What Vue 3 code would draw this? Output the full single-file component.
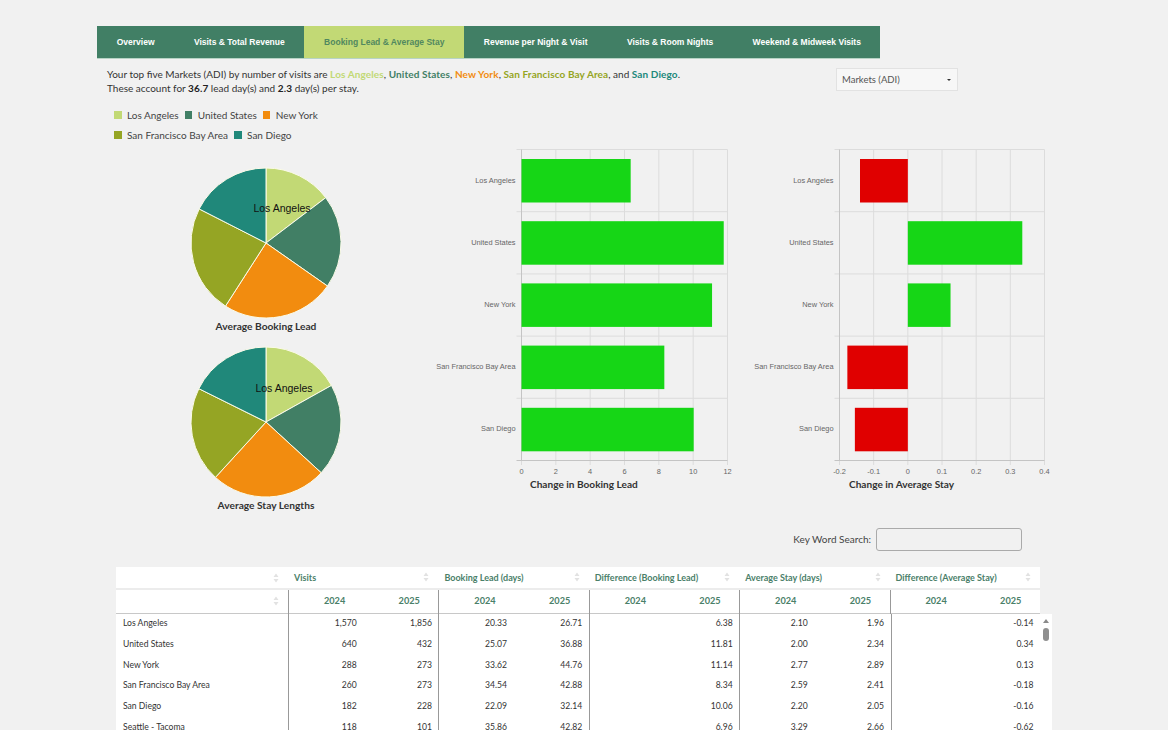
<script setup>
const tabs = ['Overview', 'Visits & Total Revenue', 'Booking Lead & Average Stay', 'Revenue per Night & Visit', 'Visits & Room Nights', 'Weekend & Midweek Visits']
const colors = { la: '#c2d975', us: '#417f65', ny: '#f28c0f', sf: '#95a524', sd: '#20887a' }
const legendRows = [
  [{ n: 'Los Angeles', c: colors.la }, { n: 'United States', c: colors.us }, { n: 'New York', c: colors.ny }],
  [{ n: 'San Francisco Bay Area', c: colors.sf }, { n: 'San Diego', c: colors.sd }]
]
const sliceColors = [colors.la, colors.us, colors.ny, colors.sf, colors.sd]
function slices(stops) {
  const pt = a => {
    const r = (a * Math.PI) / 180
    return (76 + 75 * Math.sin(r)).toFixed(2) + ' ' + (76 - 75 * Math.cos(r)).toFixed(2)
  }
  const all = [0, ...stops, 360]
  return sliceColors.map((c, i) => ({
    c,
    d: `M76 76L${pt(all[i])}A75 75 0 ${all[i + 1] - all[i] > 180 ? 1 : 0} 1 ${pt(all[i + 1])}Z`
  }))
}
const pies = [
  { title: 'Average Booking Lead', cls: 'pie-a', label: { x: 92, y: 45 }, s: slices([52.8, 125, 212.7, 297]) },
  { title: 'Average Stay Lengths', cls: 'pie-b', label: { x: 94, y: 46 }, s: slices([60.8, 132.6, 222.4, 296.4]) }
]
const names = ['Los Angeles', 'United States', 'New York', 'San Francisco Bay Area', 'San Diego']
const rowTop = i => 9.5 + i * 62.2
const charts = [
  {
    title: 'Change in Booking Lead',
    left: 91.5, right: 297.5, min: 0, max: 12, zero: 0,
    ticks: ['0', '2', '4', '6', '8', '10', '12'],
    titleX: 100,
    vals: [6.36, 11.78, 11.1, 8.32, 10.03]
  },
  {
    title: 'Change in Average Stay',
    left: 89.5, right: 294.5, min: -0.2, max: 0.4, zero: 0,
    ticks: ['-0.2', '-0.1', '0', '0.1', '0.2', '0.3', '0.4'],
    titleX: 99,
    vals: [-0.14, 0.335, 0.125, -0.177, -0.155]
  }
].map(c => {
  const sx = v => c.left + ((v - c.min) / (c.max - c.min)) * (c.right - c.left)
  return {
    ...c,
    grid: c.ticks.map((t, i) => ({ t, x: c.left + (i * (c.right - c.left)) / 6 })),
    bars: c.vals.map((v, i) => ({
      x: Math.min(sx(0), sx(v)),
      w: Math.abs(sx(v) - sx(0)),
      y: rowTop(i) + 9.5,
      c: v < 0 ? '#e00000' : '#16d616'
    })),
    rows: names.map((n, i) => ({ n, y: rowTop(i) + 30, line: rowTop(i) }))
  }
})
const groups = ['Visits', 'Booking Lead (days)', 'Difference (Booking Lead)', 'Average Stay (days)', 'Difference (Average Stay)']
const rows = [
  ['Los Angeles', '1,570', '1,856', '20.33', '26.71', '', '6.38', '2.10', '1.96', '', '-0.14'],
  ['United States', '640', '432', '25.07', '36.88', '', '11.81', '2.00', '2.34', '', '0.34'],
  ['New York', '288', '273', '33.62', '44.76', '', '11.14', '2.77', '2.89', '', '0.13'],
  ['San Francisco Bay Area', '260', '273', '34.54', '42.88', '', '8.34', '2.59', '2.41', '', '-0.18'],
  ['San Diego', '182', '228', '22.09', '32.14', '', '10.06', '2.20', '2.05', '', '-0.16'],
  ['Seattle - Tacoma', '118', '101', '35.86', '42.82', '', '6.96', '3.29', '2.66', '', '-0.62']
]
</script>

<template>
  <div class="page">
    <nav class="tabs">
      <a v-for="(t, i) in tabs" :key="t" class="tab" :class="{ active: i === 2 }">{{ t }}</a>
    </nav>

    <section class="intro">
      <p class="summary">
        Your top five Markets (ADI) by number of visits are
        <b class="c-la">Los Angeles</b>, <b class="c-us">United States</b>, <b class="c-ny">New York</b>,
        <b class="c-sf">San Francisco Bay Area</b>, and <b class="c-sd">San Diego</b>.<br />
        These account for <b class="dark">36.7</b> lead day(s) and <b class="dark">2.3</b> day(s) per stay.
      </p>
      <div class="select">
        <span>Markets (ADI)</span>
        <i class="caret"></i>
      </div>
    </section>

    <section class="main">
      <div class="left">
        <div class="legend">
          <div v-for="(r, i) in legendRows" :key="i" class="legend-row">
            <span v-for="e in r" :key="e.n" class="legend-item">
              <i class="swatch" :style="{ background: e.c }"></i>{{ e.n }}
            </span>
          </div>
        </div>
        <figure v-for="p in pies" :key="p.title" class="pie" :class="p.cls">
          <svg width="152" height="152" viewBox="0 0 152 152">
            <path v-for="s in p.s" :key="s.c" :d="s.d" :fill="s.c" stroke="#fbfbe8" stroke-width="1" />
            <text :x="p.label.x" :y="p.label.y" text-anchor="middle" class="pie-label">Los Angeles</text>
          </svg>
          <figcaption>{{ p.title }}</figcaption>
        </figure>
      </div>

      <div v-for="c in charts" :key="c.title" class="chart">
        <svg width="310" height="356" viewBox="0 0 310 356">
          <g stroke="#dcdcdc" stroke-width="1">
            <line v-for="g in c.grid" :key="g.t" :x1="g.x" :x2="g.x" y1="9.5" y2="325" />
            <line v-for="r in c.rows" :key="r.n" :x1="c.left - 5" :x2="c.right" :y1="r.line" :y2="r.line" />
          </g>
          <line :x1="c.left" :x2="c.left" y1="9.5" y2="320.5" stroke="#c4c4c4" />
          <line :x1="c.left - 5" :x2="c.right" y1="320.5" y2="320.5" stroke="#c4c4c4" />
          <rect v-for="(b, i) in c.bars" :key="i" :x="b.x" :y="b.y" :width="b.w" height="43.5" :fill="b.c" />
          <text v-for="r in c.rows" :key="r.n" :x="c.left - 6" :y="r.y + 3" text-anchor="end" class="tick">{{ r.n }}</text>
          <text v-for="g in c.grid" :key="g.t" :x="g.x" y="333.5" text-anchor="middle" class="tick">{{ g.t }}</text>
          <text :x="c.titleX" y="347.5" class="chart-title">{{ c.title }}</text>
        </svg>
      </div>
    </section>

    <section class="search">
      <label for="kw">Key Word Search:</label>
      <input id="kw" type="text" />
    </section>

    <section class="table">
      <div class="head head-top">
        <div class="hcell"><svg class="sort" width="6" height="10" viewBox="0 0 6 10"><path d="M3 0.5 5.5 4H.5zM3 9.5.5 6h5z" /></svg></div>
        <div v-for="g in groups" :key="g" class="hcell group">
          <span>{{ g }}</span>
          <svg class="sort" width="6" height="10" viewBox="0 0 6 10"><path d="M3 0.5 5.5 4H.5zM3 9.5.5 6h5z" /></svg>
        </div>
      </div>
      <div class="head head-sub">
        <div class="hcell"><svg class="sort" width="6" height="10" viewBox="0 0 6 10"><path d="M3 0.5 5.5 4H.5zM3 9.5.5 6h5z" /></svg></div>
        <template v-for="g in groups" :key="g">
          <div class="year first">2024</div>
          <div class="year">2025</div>
        </template>
      </div>
      <div class="body">
        <div class="rows">
          <div v-for="r in rows" :key="r[0]" class="row">
            <div v-for="(v, i) in r" :key="i" class="cell" :class="{ name: i === 0, first: i % 2 === 1 }">{{ v }}</div>
          </div>
        </div>
        <div class="scroll">
          <i class="arrow"></i>
          <i class="thumb"></i>
        </div>
      </div>
    </section>
  </div>
</template>

<style>
html, body {
  margin: 0;
  height: 730px;
  overflow: hidden;
  background: #f1f1f1;
}
</style>

<style scoped>
.page {
  width: 1168px;
  height: 730px;
  overflow: hidden;
  padding-top: 26px;
  box-sizing: border-box;
  font-family: Lato, "Liberation Sans", sans-serif;
  color: #333;
  background: #f1f1f1;
}
.tabs {
  display: flex;
  width: 783px;
  height: 32px;
  margin-left: 97px;
  background: #417f65;
  border-bottom: 1px solid #b7d3c5;
}
.tab {
  display: flex;
  align-items: center;
  flex: 0 0 auto;
  padding: 0 19.7px;
  font: bold 8.5px "Liberation Sans", Arial, sans-serif;
  color: #fff;
}
.tab.active {
  background: #c2d975;
  color: #51885f;
}
.intro {
  display: flex;
  justify-content: space-between;
  width: 851px;
  height: 46px;
  margin-left: 107px;
}
.summary {
  margin: 8px 0 0;
  font-size: 10px;
  line-height: 14px;
  white-space: nowrap;
}
.summary b { font-weight: 700; letter-spacing: 0.11px; }
.c-la { color: #c2d975; }
.c-us { color: #417f65; }
.c-ny { color: #f28c0f; }
.c-sf { color: #95a524; }
.c-sd { color: #20887a; }
.dark { color: #222; }
.select {
  display: flex;
  align-items: center;
  justify-content: space-between;
  box-sizing: border-box;
  width: 122px;
  height: 23px;
  margin-top: 9px;
  padding: 0 6px 0 5px;
  background: #f7f7f7;
  border: 1px solid #e2e2e2;
  font-size: 9.5px;
  color: #555;
}
.caret {
  border-left: 2px solid transparent;
  border-right: 2px solid transparent;
  border-top: 2.5px solid #333;
}
.main {
  display: flex;
  height: 420px;
  margin-left: 97px;
}
.left {
  flex: 0 0 338px;
  position: relative;
}
.legend {
  padding: 0 0 0 17px;
  font-size: 10px;
  color: #444;
}
.legend-row {
  display: flex;
  gap: 6px;
  height: 20px;
  align-items: center;
}
.legend-item {
  display: flex;
  align-items: center;
  white-space: nowrap;
}
.swatch {
  width: 7.5px;
  height: 7.5px;
  margin-right: 5.5px;
}
.pie {
  display: flex;
  flex-direction: column;
  align-items: center;
  margin: 0;
}
.pie-a { margin-top: 22px; }
.pie-b { margin-top: 14px; }
.pie figcaption {
  margin-top: 1px;
  font-size: 10.2px;
  font-weight: 700;
  color: #333;
  line-height: 12px;
}
.pie-label {
  font: 10.5px "Liberation Sans", Arial, sans-serif;
  fill: #111;
}
.chart {
  flex: 0 0 auto;
  margin: 35px 0 0 -5px;
  height: 356px;
}
.chart + .chart { margin-left: 10px; }
.chart svg { display: block; }
.tick {
  font: 7.4px "Liberation Sans", Arial, sans-serif;
  fill: #666;
}
.chart-title {
  font: 700 10.1px Lato, sans-serif;
  fill: #333;
}
.search {
  display: flex;
  align-items: center;
  justify-content: flex-end;
  gap: 5px;
  width: 1022px;
  height: 23px;
  margin-top: 3px;
  font-size: 10px;
  color: #444;
}
.search label { padding-bottom: 2px; }
.search input {
  box-sizing: border-box;
  width: 146px;
  height: 23px;
  margin: 0;
  padding: 0;
  background: #f1f1f1;
  border: 1px solid #aaa;
  border-radius: 3px;
}
.table {
  margin: 16px 0 0 116px;
  width: 936px;
  font-size: 9px;
}
.head {
  display: grid;
  width: 924px;
  background: #fff;
}
.head-top {
  grid-template-columns: 172px repeat(5, 150.4px);
  height: 21px;
  border-bottom: 2px solid #ececec;
}
.head-sub {
  grid-template-columns: 172px repeat(10, 75.2px);
  height: 23px;
  border-bottom: 1px solid #c8c8c8;
}
.hcell {
  display: flex;
  align-items: center;
  justify-content: flex-end;
  padding-right: 9px;
}
.head-sub .hcell { padding-bottom: 2px; }
.group {
  justify-content: space-between;
  padding-left: 6px;
  padding-bottom: 1px;
  font-weight: 700;
  color: #4a8069;
  white-space: nowrap;
}
.sort { fill: #e2e2e2; flex: none; }
.year {
  display: flex;
  align-items: center;
  justify-content: center;
  padding: 0 0 2px 17px;
  font-size: 9.2px;
  font-weight: 700;
  color: #4a8069;
}
.year.first {
  border-left: 1px solid #999;
  margin-bottom: -1px;
  padding-bottom: 3px;
}
.body {
  display: flex;
  background: #fff;
  height: 150px;
  overflow: hidden;
}
.rows { width: 924px; }
.row {
  display: grid;
  grid-template-columns: 172px repeat(7, 75.2px) 76.2px 75.2px 74.2px;
  height: 20.7px;
}
.cell {
  display: flex;
  align-items: center;
  justify-content: flex-end;
  padding: 0 6.5px 2px 0;
  color: #333;
  white-space: nowrap;
  font-size: 8.6px;
}
.cell.first { border-left: 1px solid #999; }
.cell.name {
  justify-content: flex-start;
  padding-left: 7px;
}
.scroll {
  position: relative;
  width: 12px;
}
.arrow {
  position: absolute;
  top: 5px;
  left: 3px;
  border-left: 3px solid transparent;
  border-right: 3px solid transparent;
  border-bottom: 4px solid #8a8a8a;
}
.thumb {
  position: absolute;
  top: 14px;
  left: 3px;
  width: 6px;
  height: 13px;
  border-radius: 3px;
  background: #8f8f8f;
}
</style>
